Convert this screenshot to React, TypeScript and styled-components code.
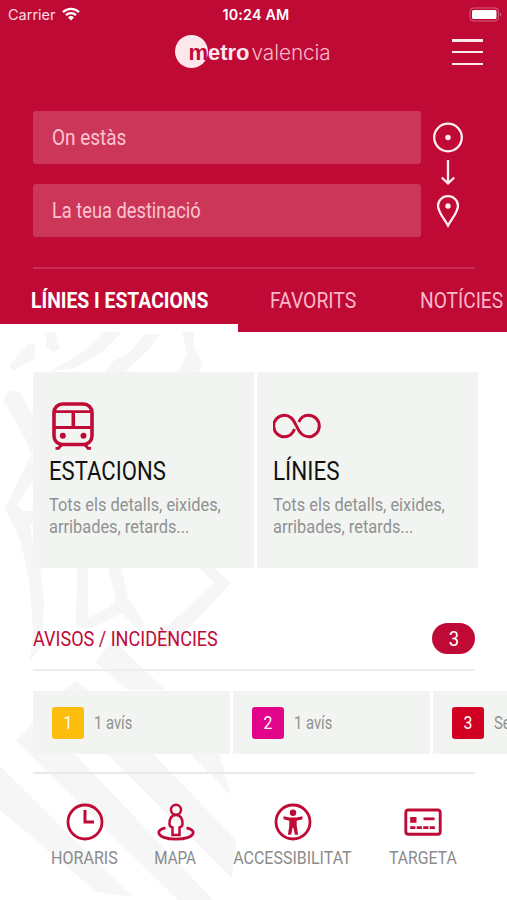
import React from "react";
import styled, { createGlobalStyle } from "styled-components";

const RED = "#c00a36";

const GlobalStyle = createGlobalStyle`
  body { margin: 0; background: #fff; }
  * { box-sizing: border-box; }
`;

const Screen = styled.div`
  position: relative;
  width: 507px;
  height: 900px;
  overflow: hidden;
  background: #fff;
  font-family: Roboto, sans-serif;
`;

const Watermark = styled.svg`
  position: absolute;
  inset: 0;
`;

const Header = styled.header`
  position: relative;
  height: 332px;
  background: ${RED};
`;

/* Narrow lettering: regular Roboto compressed horizontally. */
const Narrow = styled.span<{ $size: number; $k?: number; $origin?: string; $weight?: number }>`
  display: block;
  flex: none;
  white-space: nowrap;
  font-size: ${(p) => p.$size}px;
  font-weight: ${(p) => p.$weight ?? 400};
  transform: scaleX(${(p) => p.$k ?? 0.88});
  transform-origin: ${(p) => p.$origin ?? "left"} center;
`;

const StatusBar = styled.div`
  display: grid;
  grid-template-columns: 1fr auto 1fr;
  align-items: center;
  height: 28px;
  padding: 0 5px 0 8px;
  color: #fff;
  font-family: Inter, sans-serif;
  font-size: 14.5px;
`;

const Carrier = styled.div`
  display: flex;
  align-items: center;
  gap: 6px;
  color: #fbdbe3;
`;

const Clock = styled.div`
  font-weight: 600;
  font-size: 14.3px;
  letter-spacing: 0.2px;
  margin-left: 2px;
`;

const Battery = styled.svg`
  justify-self: end;
`;

const Brand = styled.div`
  display: flex;
  align-items: center;
  height: 46px;
  padding: 0 24px 0 175px;
`;

const Disc = styled.div`
  display: flex;
  flex: none;
  justify-content: flex-end;
  width: 33px;
  height: 33px;
  border-radius: 50%;
  background: #fde6ec;
`;

const Word = styled.span<{ $light?: boolean; $dark?: boolean }>`
  font-family: ${(p) => (p.$light ? "Inter" : '"Liberation Sans"')}, sans-serif;
  font-weight: ${(p) => (p.$light ? 300 : 700)};
  font-size: ${(p) => (p.$light ? 20.8 : 22)}px;
  letter-spacing: ${(p) => (p.$light ? -0.1 : 0)}px;
  line-height: 36px;
  padding-top: ${(p) => (p.$dark ? 0 : 3)}px;
  margin-left: ${(p) => (p.$light ? 2 : 0)}px;
  color: ${(p) => (p.$dark ? RED : p.$light ? "#f7b9c8" : "#fde6ec")};
`;

const Burger = styled.button`
  display: flex;
  flex-direction: column;
  justify-content: space-between;
  width: 31px;
  height: 26px;
  margin: 2px 0 0 auto;
  padding: 0;
  border: 0;
  background: none;
`;

const Line = styled.i`
  height: 2.5px;
  background: #fde9ee;
`;

const Search = styled.section`
  display: flex;
  gap: 12px;
  padding: 37px 0 0 33px;
`;

const Fields = styled.div`
  display: grid;
  gap: 20px;
  width: 388px;
`;

const Field = styled.div`
  display: flex;
  align-items: center;
  height: 53px;
  padding: 0 20px 1px 19px;
  border-radius: 3px;
  background: #cc3759;
  color: #fbc3d1;
`;

const Rule = styled.div<{ $color: string; $top: number }>`
  height: 2px;
  margin: ${(p) => p.$top}px 32px 0 33px;
  background: ${(p) => p.$color};
`;

const Tabs = styled.nav`
  display: flex;
  height: 63px;
`;

const Tab = styled.div<{ $w: number; $pad: number; $active?: boolean }>`
  flex: none;
  width: ${(p) => p.$w}px;
  padding-left: ${(p) => p.$pad}px;
  line-height: 64px;
  height: 63px;
  color: ${(p) => (p.$active ? "#fff" : "#fbb9c9")};
  border-bottom: ${(p) => (p.$active ? "8px solid #fff" : "0")};
`;

const Body = styled.main`
  position: relative;
  padding-top: 40px;
`;

const Cards = styled.div`
  display: flex;
  gap: 3px;
  margin-left: 33px;
`;

const Card = styled.article`
  width: 221px;
  height: 196px;
  padding: 29px 0 0 15.5px;
  background: #f2f4f2;
`;

const CardIcon = styled.div`
  display: flex;
  align-items: center;
  height: 50px;
`;

const CardTitle = styled.h2`
  margin: 5px 0 0;
  line-height: 31px;
  color: #111;
  font-weight: 400;
`;

const CardText = styled.div`
  margin-top: 7px;
  line-height: 21.5px;
  color: #8f9191;
`;

const Notices = styled.div`
  display: flex;
  justify-content: space-between;
  align-items: center;
  height: 31px;
  margin: 55px 32px 0 33px;
  color: ${RED};
`;

const Count = styled.div`
  display: flex;
  justify-content: center;
  align-items: center;
  width: 43px;
  height: 31px;
  border-radius: 16px;
  background: ${RED};
  color: #fff;
`;

const Lines = styled.div`
  display: flex;
  gap: 3px;
  margin: 20px 0 0 33px;
`;

const LineCard = styled.div`
  display: flex;
  flex: none;
  align-items: center;
  gap: 10px;
  width: 197px;
  height: 63px;
  padding-left: 19px;
  background: #f2f4f2;
  color: #8f9191;
`;

const LineTag = styled.div<{ $bg: string }>`
  display: flex;
  align-items: center;
  justify-content: center;
  width: 32px;
  height: 32px;
  border-radius: 3px;
  background: ${(p) => p.$bg};
  color: #fff;
`;

const Shortcuts = styled.nav`
  display: flex;
  gap: 37px;
  margin: 29px 0 0 51px;
`;

const Shortcut = styled.div<{ $w: number }>`
  display: flex;
  flex-direction: column;
  align-items: center;
  gap: 5px;
  width: ${(p) => p.$w}px;
  line-height: 24px;
  color: #8b8b8b;
`;

const WifiIcon = () => (
  <svg width="18" height="14" viewBox="0 0 18 14">
    <path d="M1 5.2a11.5 11.5 0 0 1 16 0M4 8.2a7.2 7.2 0 0 1 10 0" fill="none" stroke="#fff" strokeWidth="2.3" />
    <path d="M6 10.4a4.4 4.4 0 0 1 6 0L9 13.5z" fill="#fff" />
  </svg>
);

const BatteryIcon = () => (
  <Battery width="33" height="15" viewBox="0 0 33 15">
    <rect x="1" y="1" width="28.5" height="13" rx="3.5" fill="none" stroke="#d8607e" />
    <rect x="3" y="3" width="24.5" height="9" rx="1.5" fill="#fff" />
    <path d="M31 5.5v4c1.6-.6 1.6-3.4 0-4z" fill="#d8607e" />
  </Battery>
);

const RouteIcon = () => (
  <svg width="30" height="118" viewBox="0 0 30 118" fill="none" stroke="#fff0f3" strokeWidth="2.3">
    <circle cx="15" cy="26.5" r="13.800" />
    <circle cx="15" cy="26.500" r="2.700" fill="#fff0f3" stroke="none" />
    <path d="M15 49v23.500M8.800 66.500l6.200 6 6.200-6" />
    <path d="M15 114.500C12 108.500 5 101.500 5 94.700a10 9.500 0 0 1 20 0C25 101.500 18 108.500 15 114.500z" />
    <circle cx="15" cy="95" r="2.700" fill="#fff0f3" stroke="none" />
  </svg>
);

const TrainIcon = () => (
  <svg width="48" height="50" viewBox="0 0 48 50" fill="none" stroke={RED} strokeWidth="2.800">
    <rect x="5" y="3" width="38" height="40.500" rx="8.500" strokeWidth="3.600" />
    <path d="M5 10.700h38M5 26.500h38" />
    <path d="M24.300 11v15" strokeWidth="3.600" />
    <circle cx="13.800" cy="34.800" r="3" fill={RED} stroke="none" />
    <circle cx="34.500" cy="34.800" r="3" fill={RED} stroke="none" />
    <path d="M6.500 47.300h3l4-4.500M42 47.300h-3l-4-4.500" strokeWidth="2.800" />
  </svg>
);

const InfinityIcon = () => (
  <svg width="50" height="26" viewBox="0.500 0 50 26" fill="none" stroke={RED} strokeWidth="3">
    <path d="M22 16C20.400 20.800 16.200 23.800 12 23.800A10.800 10.800 0 0 1 12 2.200C18.500 2.200 21.500 7 24 13S29.500 23.800 36 23.800A10.800 10.800 0 0 0 36 2.200C31.800 2.200 28 5 26.300 9" />
  </svg>
);

const ClockIcon = () => (
  <svg width="38" height="38" viewBox="0 0 38 38" fill="none" stroke={RED}>
    <circle cx="19" cy="19" r="17" strokeWidth="2.800" />
    <path d="M19 7v12h9" strokeWidth="3" />
  </svg>
);

const PersonIcon = () => (
  <svg width="38" height="38" viewBox="0 0 38 38" fill="none" stroke={RED} strokeWidth="2.500">
    <circle cx="19" cy="6.800" r="5" />
    <path d="M15.500 32v-7.500c-2-.5-3-1.500-3-3.500 0-6 2-9 6.500-9s6.500 3 6.500 9c0 2-1 3-3 3.500V32z" />
    <path d="M8.500 24.800c-4.300 1-6.700 2.500-6.700 4.700 0 4 7.700 6.700 17.200 6.700s17.200-2.700 17.200-6.700c0-2.200-2.400-3.700-6.700-4.700" strokeWidth="2.800" />
  </svg>
);

const AccessIcon = () => (
  <svg width="38" height="38" viewBox="0 0 38 38" fill="none" stroke={RED}>
    <circle cx="19" cy="19" r="17" strokeWidth="2.800" />
    <circle cx="19" cy="9.800" r="3.200" fill={RED} stroke="none" />
    <path d="M9.500 13.200l6 1.200h7l6-1.200v3l-5.800 1.500v5l1.400 9h-3.200l-1.500-7h-.8l-1.500 7h-3.200l1.400-9v-5l-5.800-1.500z" fill={RED} stroke="none" />
  </svg>
);

const CardGlyph = () => (
  <svg width="38" height="38" viewBox="0 0 38 38" fill="none" stroke={RED}>
    <rect x="1.800" y="7" width="34.400" height="24.300" rx="2.500" strokeWidth="2.900" />
    <rect x="6.200" y="14" width="6.300" height="5.800" fill={RED} stroke="none" />
    <path d="M19.500 15.800h11" strokeWidth="2.800" />
    <path d="M6.200 24.600h25" strokeWidth="2.900" strokeDasharray="5.200 1.300" />
  </svg>
);

const lines = [
  { n: "1", bg: "#fcbd0d", text: "1 avís" },
  { n: "2", bg: "#e2058a", text: "1 avís" },
  { n: "3", bg: "#d20022", text: "Se" },
];

export default function App() {
  return (
    <Screen>
      <GlobalStyle />
      <Watermark width="507" height="900" viewBox="0 0 507 900" fill="#f6f6f6">
        <path d="M9 366l5 4 20-11 2-14-8-1z M46 334l11-3-1 9 4 8-7 4-7-6z M105 332h17l-20 20-27 16-27 4 18-10 19-12z M145 334h15l-12 16-23 22h-20l7-10 18-10z M182 332h12v16l9 16-5 8h-20l9-17z" />
        <circle cx="13" cy="400" r="9.500" />
        <path d="M8 408l13-13 12 21v46l-7-22z M33 450L5 508l15 32 7 30 3 12h10l-7-37-3-21h3v-13h-9l-7-6 16-25z" />
        <path d="M28 568h12l4 32-2 46-12 15 3-31-3-40z M77 568h11v50l20-10 8-8-8-32h13l7 30 17 27-5 7-18-19-30 15H76z M199 568h15l17 15-61 65h-20l8-13 56-52z" />
        <path d="M113 640l52 50h-37l-33-28z M76 681l14 11H62z M33 723l-17 18 162 159h35L75 754H33z M107 754h46l83 86-4 38z M190 754h29l12 41z M0 766l132 131-35-5L0 810z" />
      </Watermark>
      <Header>
        <StatusBar>
          <Carrier>Carrier<WifiIcon /></Carrier>
          <Clock>10:24 AM</Clock>
          <BatteryIcon />
        </StatusBar>
        <Brand>
          <Disc><Word $dark>m</Word></Disc>
          <Word>etro</Word>
          <Word $light>valencia</Word>
          <Burger aria-label="Menú"><Line /><Line /><Line /></Burger>
        </Brand>
        <Search>
          <Fields>
            <Field><Narrow $size={22} $k={0.862}>On estàs</Narrow></Field>
            <Field><Narrow $size={22} $k={0.83}>La teua destinació</Narrow></Field>
          </Fields>
          <RouteIcon />
        </Search>
        <Rule $color="#cb2c52" $top={30} />
        <Tabs>
          <Tab $w={238} $pad={30.5} $active><Narrow $size={22} $weight={700}>LÍNIES I ESTACIONS</Narrow></Tab>
          <Tab $w={150} $pad={32}><Narrow $size={22}>FAVORITS</Narrow></Tab>
          <Tab $w={119} $pad={32}><Narrow $size={22} $k={0.87}>NOTÍCIES</Narrow></Tab>
        </Tabs>
      </Header>
      <Body>
        <Cards>
          <Card>
            <CardIcon><TrainIcon /></CardIcon>
            <CardTitle><Narrow $size={26} $k={0.85}>ESTACIONS</Narrow></CardTitle>
            <CardText>
              <Narrow $size={19} $k={0.863}>Tots els detalls, eixides,</Narrow>
              <Narrow $size={19} $k={0.863}>arribades, retards...</Narrow>
            </CardText>
          </Card>
          <Card>
            <CardIcon><InfinityIcon /></CardIcon>
            <CardTitle><Narrow $size={26} $k={0.865}>LÍNIES</Narrow></CardTitle>
            <CardText>
              <Narrow $size={19} $k={0.863}>Tots els detalls, eixides,</Narrow>
              <Narrow $size={19} $k={0.863}>arribades, retards...</Narrow>
            </CardText>
          </Card>
        </Cards>
        <Notices>
          <Narrow $size={21} $k={0.86}>AVISOS / INCIDÈNCIES</Narrow>
          <Count><Narrow $size={21} $origin="center">3</Narrow></Count>
        </Notices>
        <Rule $color="#ececec" $top={15} />
        <Lines>
          {lines.map((l) => (
            <LineCard key={l.n}>
              <LineTag $bg={l.bg}><Narrow $size={18} $origin="center">{l.n}</Narrow></LineTag>
              <Narrow $size={18} $k={0.82}>{l.text}</Narrow>
            </LineCard>
          ))}
        </Lines>
        <Rule $color="#e9e9e9" $top={18} />
        <Shortcuts>
          <Shortcut $w={67}><ClockIcon /><Narrow $size={19} $k={0.845} $origin="center">HORARIS</Narrow></Shortcut>
          <Shortcut $w={41}><PersonIcon /><Narrow $size={19} $k={0.8} $origin="center">MAPA</Narrow></Shortcut>
          <Shortcut $w={119}><AccessIcon /><Narrow $size={19} $k={0.84} $origin="center">ACCESSIBILITAT</Narrow></Shortcut>
          <Shortcut $w={67}><CardGlyph /><Narrow $size={19} $k={0.83} $origin="center">TARGETA</Narrow></Shortcut>
        </Shortcuts>
      </Body>
    </Screen>
  );
}
